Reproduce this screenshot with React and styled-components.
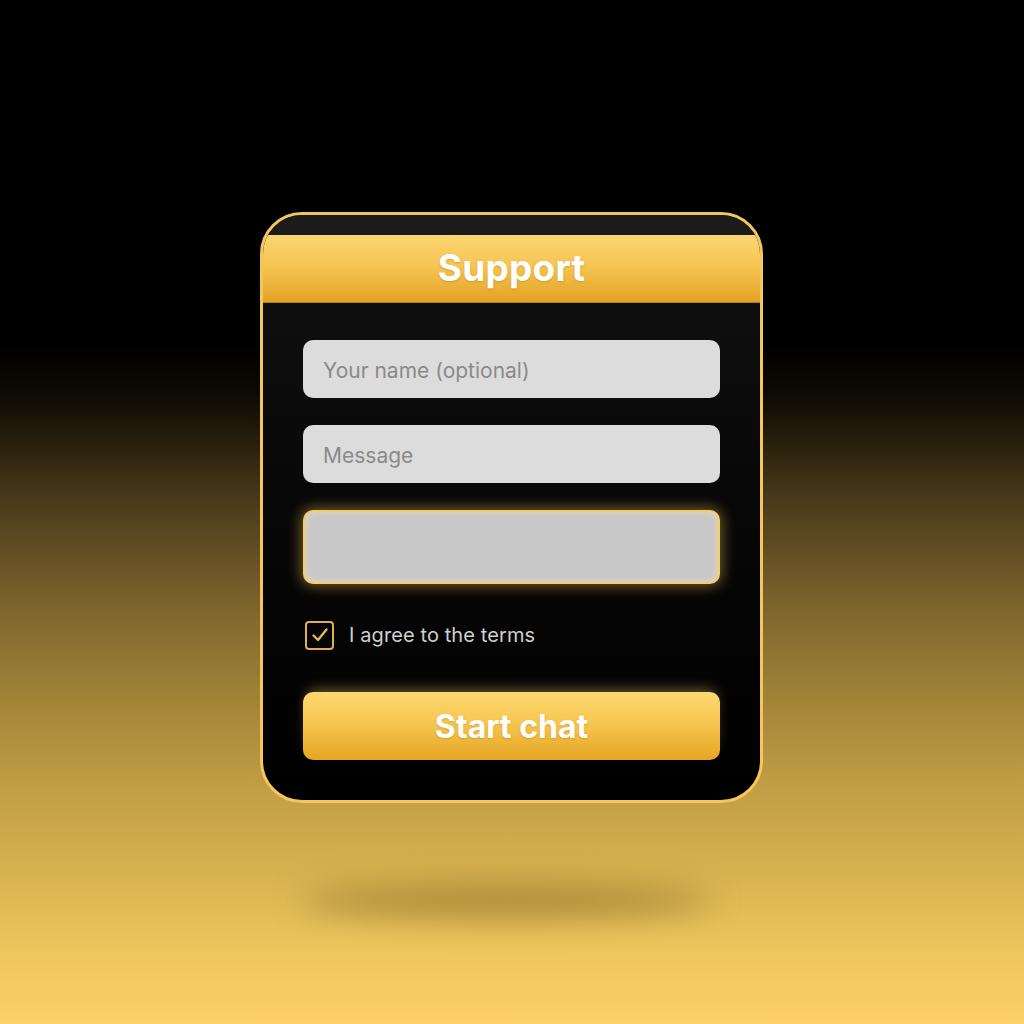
import React, { useState } from "react";
import styled, { createGlobalStyle } from "styled-components";

const Global = createGlobalStyle`
  html, body { margin: 0; padding: 0; }
  body {
    font-family: Inter, "Noto Sans", Roboto, sans-serif;
    background: #000;
  }
  * { box-sizing: border-box; }
`;

const Page = styled.div`
  width: 1024px;
  height: 1024px;
  overflow: hidden;
  display: flex;
  flex-direction: column;
  align-items: center;
  padding-top: 212px;
  background: linear-gradient(
    180deg,
    #000 0px,
    #000 345px,
    #0e0b03 395px,
    #2a200c 445px,
    #46381a 495px,
    #655024 555px,
    #846b30 625px,
    #a48538 705px,
    #c09e45 785px,
    #d8b14f 870px,
    #eec65e 950px,
    #fdd068 1024px
  );
`;

const CardWrap = styled.div`
  position: relative;
  margin-left: -1px;
  &::after {
    content: "";
    position: absolute;
    left: 40px;
    right: 50px;
    top: 674px;
    height: 30px;
    border-radius: 50%;
    background: rgba(125, 100, 35, 0.6);
    filter: blur(16px);
    z-index: 0;
  }
`;

const Card = styled.div`
  position: relative;
  z-index: 1;
  width: 503px;
  height: 591px;
  border: 3px solid #f4c65c;
  border-radius: 42px;
  overflow: hidden;
  display: flex;
  flex-direction: column;
  background: linear-gradient(180deg, #121212 0%, #070707 50%, #000 100%);
`;

const TopStrip = styled.div`
  height: 20px;
  background: #1c1c1c;
  flex: none;
`;

const Header = styled.div`
  height: 68px;
  flex: none;
  display: flex;
  align-items: center;
  justify-content: center;
  background: linear-gradient(180deg, #fbd672 0%, #f6c553 45%, #e3a323 100%);
  border-bottom: 1px solid #b8801a;
`;

const Title = styled.h1`
  margin: 0;
  color: #fff;
  font-size: 37px;
  font-weight: 700;
  letter-spacing: 0.2px;
  text-shadow: 0 1px 2px rgba(150, 100, 0, 0.35);
  padding-bottom: 2px;
`;

const Body = styled.div`
  flex: 1;
  display: flex;
  flex-direction: column;
  padding: 37px 40px 0 40px;
`;

const Field = styled.input`
  width: 417px;
  height: ${(p) => (p.$tall ? "74px" : "58px")};
  margin-bottom: ${(p) => p.$mb}px;
  border-radius: 10px;
  border: ${(p) => (p.$active ? "2.5px solid #f7cc62" : "none")};
  background: ${(p) => (p.$active ? "#c8c8c8" : "#dcdcdc")};
  padding: 2px 20px 0 20px;
  font-family: Inter, "Noto Sans", Roboto, sans-serif;
  font-size: 21px;
  color: #333;
  outline: none;
  box-shadow: ${(p) =>
    p.$active
      ? "0 0 14px 2px rgba(255, 204, 90, 0.45), inset 0 0 8px rgba(255, 235, 170, 0.5)"
      : "none"};
  &::placeholder {
    color: #8a8a8a;
  }
`;

const CheckRow = styled.label`
  display: flex;
  align-items: center;
  gap: 15px;
  height: 28px;
  margin-left: 2px;
  margin-bottom: 43px;
  cursor: pointer;
`;

const Box = styled.span`
  width: 29px;
  height: 29px;
  border: 2px solid #e0b04a;
  border-radius: 4px;
  display: flex;
  align-items: center;
  justify-content: center;
  flex: none;
`;

const CheckLabel = styled.span`
  color: #cfcfcf;
  font-size: 20px;
  letter-spacing: 0.1px;
`;

const Button = styled.button`
  width: 417px;
  height: 68px;
  border: none;
  border-radius: 10px;
  background: linear-gradient(180deg, #fdd870 0%, #f6c650 45%, #e6a524 100%);
  color: #fff;
  font-family: Inter, "Noto Sans", Roboto, sans-serif;
  font-size: 32px;
  font-weight: 700;
  padding-top: 2px;
  box-shadow: 0 -7px 14px -5px rgba(255, 210, 110, 0.45);
  text-shadow: 0 1px 2px rgba(150, 100, 0, 0.3);
  cursor: pointer;
`;

export default function App() {
  const [agree, setAgree] = useState(true);
  return (
    <>
      <Global />
      <Page>
        <CardWrap>
          <Card>
            <TopStrip />
            <Header>
              <Title>Support</Title>
            </Header>
            <Body>
              <Field placeholder="Your name (optional)" $mb={27} />
              <Field placeholder="Message" $mb={27} />
              <Field $tall $active $mb={37} />
              <CheckRow onClick={() => setAgree(!agree)}>
                <Box>
                  {agree && (
                    <svg width="20" height="20" viewBox="0 0 20 20" fill="none">
                      <path
                        d="M3.5 10.5 L8 15 L16.5 4.5"
                        stroke="#e8b64e"
                        strokeWidth="2.4"
                        strokeLinecap="round"
                        strokeLinejoin="round"
                      />
                    </svg>
                  )}
                </Box>
                <CheckLabel>I agree to the terms</CheckLabel>
              </CheckRow>
              <Button>Start chat</Button>
            </Body>
          </Card>
        </CardWrap>
      </Page>
    </>
  );
}
